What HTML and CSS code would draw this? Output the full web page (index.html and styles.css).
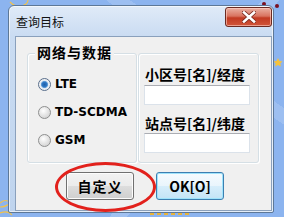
FILE: index.html
```html
<!DOCTYPE html>
<html lang="zh">
<head>
<meta charset="utf-8">
<title>查询目标</title>
<link rel="stylesheet" href="styles.css">
</head>
<body>
<svg class="deco" width="284" height="217" viewBox="0 0 284 217" aria-hidden="true">
  <path d="M10 2 q8 8 16 2 q4 -4 0 -6" fill="none" stroke="#f2c24a" stroke-width="1.2"/>
  <path d="M0 203 q6 -5 10 0 q-4 4 -10 4" fill="none" stroke="#f2c24a" stroke-width="1.2"/>
  <path d="M0 213 q8 -3 12 2" fill="none" stroke="#f2c24a" stroke-width="1.2"/>
  <circle cx="264" cy="4" r="2" fill="#7a1020"/>
  <circle cx="277" cy="6" r="2" fill="#7a1020"/>
  <path d="M278 58 l1.5 3 3 0.5 -2.2 2 0.6 3 -2.9 -1.5 -2.9 1.5 0.6 -3 -2.2 -2 3 -0.5z" fill="#f5c23c"/>
  <path d="M150 214 h40" stroke="#e9b43a" stroke-width="2" stroke-dasharray="4 3"/>
</svg>

<div class="window">
  <div class="titlebar">
    <span class="title">查询目标</span>
    <span class="close">
      <svg width="14" height="12" viewBox="0 0 14 12" aria-hidden="true">
        <path d="M2 1.5 L12 10.5 M12 1.5 L2 10.5" stroke="#7a2a1e" stroke-width="4.2" stroke-linecap="square"/>
        <path d="M2 1.5 L12 10.5 M12 1.5 L2 10.5" stroke="#ffffff" stroke-width="2.6" stroke-linecap="square"/>
      </svg>
    </span>
  </div>
  <div class="client">
    <div class="groups">
      <div class="group group-left">
        <span class="legend">网络与数据</span>
        <div class="radios">
          <label class="radio-row"><span class="radio checked"></span><span class="latin">LTE</span></label>
          <label class="radio-row"><span class="radio"></span><span class="latin">TD-SCDMA</span></label>
          <label class="radio-row"><span class="radio"></span><span class="latin">GSM</span></label>
        </div>
      </div>
      <div class="group group-right">
        <div class="field-label">小区号[名]/经度</div>
        <div class="textbox"></div>
        <div class="field-label second">站点号[名]/纬度</div>
        <div class="textbox"></div>
      </div>
    </div>
    <div class="buttons">
      <span class="btn">自定义</span>
      <span class="btn btn-default">OK[O]</span>
    </div>
  </div>
</div>

<div class="mark"></div>
</body>
</html>
```

FILE: styles.css
```css
html, body {
  margin: 0;
  padding: 0;
}

body {
  width: 284px;
  height: 217px;
  overflow: hidden;
  position: relative;
  background:
    linear-gradient(125deg, transparent 0 60%, rgba(255,255,255,0.18) 60% 64%, transparent 64%),
    linear-gradient(35deg, transparent 0 70%, rgba(255,255,255,0.15) 70% 74%, transparent 74%),
    #8cb4ef;
  font-family: "Noto Sans CJK SC", "DejaVu Sans", sans-serif;
  color: #000;
}

.deco {
  position: absolute;
  left: 0;
  top: 0;
}

.window {
  position: absolute;
  left: 8px;
  top: 5px;
  width: 266px;
  height: 208px;
  box-sizing: border-box;
  border: 1px solid #5d7898;
  border-radius: 6px 6px 2px 2px;
  background: linear-gradient(#e0ebf8 0, #cadcf2 30px, #bfd4ee 100%);
  padding: 0 1px 1px 6px;
  display: flex;
  flex-direction: column;
  box-shadow: inset 0 0 0 1px rgba(255,255,255,0.6);
}

.titlebar {
  height: 30px;
  display: flex;
  justify-content: space-between;
  align-items: flex-start;
}

.title {
  margin-top: 8px;
  margin-left: 1px;
  font-size: 12px;
  line-height: 16px;
  color: #111;
}

.close {
  margin-top: 1px;
  width: 47px;
  height: 20px;
  box-sizing: border-box;
  border: 1px solid #6b2a22;
  border-radius: 3px;
  background: linear-gradient(#eab0a2 0, #d9735f 45%, #c23a22 55%, #d0553a 100%);
  box-shadow: inset 0 0 0 1px rgba(255,210,200,0.6);
  display: flex;
  align-items: center;
  justify-content: center;
}

.client {
  height: 175px;
  box-sizing: border-box;
  border: 1px solid #8aa0bc;
  background: #f0f0f0;
  display: flex;
  flex-direction: column;
}

.groups {
  display: flex;
  gap: 1px;
  margin-top: 16px;
  margin-left: 11px;
}

.group {
  position: relative;
  height: 110px;
  box-sizing: border-box;
  border: 1px solid #d5dfe5;
  border-radius: 3px;
  box-shadow: inset 1px 1px 0 #fff, 1px 1px 0 #fff;
}

.group-left {
  width: 110px;
}

.group-right {
  width: 121px;
  padding: 12px 0 0 5px;
}

.legend {
  position: absolute;
  left: 7px;
  top: -10px;
  padding: 0 2px;
  background: #f0f0f0;
  font-size: 14px;
  font-weight: bold;
  line-height: 16px;
  letter-spacing: 1px;
}

.radios {
  display: flex;
  flex-direction: column;
  padding: 16px 0 0 10px;
}

.radio-row {
  height: 28px;
  display: flex;
  align-items: center;
  gap: 4px;
}

.radio {
  width: 13px;
  height: 13px;
  box-sizing: border-box;
  border-radius: 50%;
  border: 1px solid #8e8f8f;
  background: radial-gradient(circle at 40% 35%, #ffffff 0, #e6e6e6 45%, #c9c9c9 100%);
}

.radio.checked {
  border-color: #5a6f8c;
  background: radial-gradient(circle at 50% 50%, #1f5fa8 0, #2d77c4 30%, #6aa2d8 42%, #dfe9f3 50%, #f4f4f4 70%, #d0d0d0 100%);
}

.latin {
  font-family: "DejaVu Sans", sans-serif;
  font-weight: bold;
  font-size: 12px;
  line-height: 14px;
}

.field-label {
  margin-left: 1px;
  font-size: 14px;
  font-weight: bold;
  line-height: 16px;
  margin-bottom: 3px;
}

.field-label.second {
  margin-top: 10px;
  margin-bottom: 2px;
}

.textbox {
  width: 106px;
  height: 20px;
  box-sizing: border-box;
  background: #fff;
  border: 1px solid #dbe2ea;
  border-top-color: #abadb3;
}

.buttons {
  display: flex;
  gap: 22px;
  margin-top: 9px;
  margin-left: 50px;
}

.btn {
  width: 68px;
  height: 28px;
  box-sizing: border-box;
  border: 1px solid #707070;
  border-radius: 3px;
  background: linear-gradient(#f2f2f2 0, #ebebeb 50%, #dddddd 50%, #cfcfcf 100%);
  box-shadow: inset 0 0 0 1px #fcfcfc;
  display: flex;
  align-items: center;
  justify-content: center;
  font-size: 14px;
  font-weight: bold;
  line-height: 16px;
  letter-spacing: 1px;
}

.btn-default {
  border-color: #3c7fb1;
  background: linear-gradient(#f6fbfe 0, #e9f5fc 50%, #d7eefb 50%, #c4e4f6 100%);
  box-shadow: inset 0 0 0 1px #9fe3fb;
  letter-spacing: 0;
}

.mark {
  position: absolute;
  left: 55px;
  top: 162px;
  width: 101px;
  height: 50px;
  box-sizing: border-box;
  border: 3px solid #e2211c;
  border-radius: 50%;
}
```
